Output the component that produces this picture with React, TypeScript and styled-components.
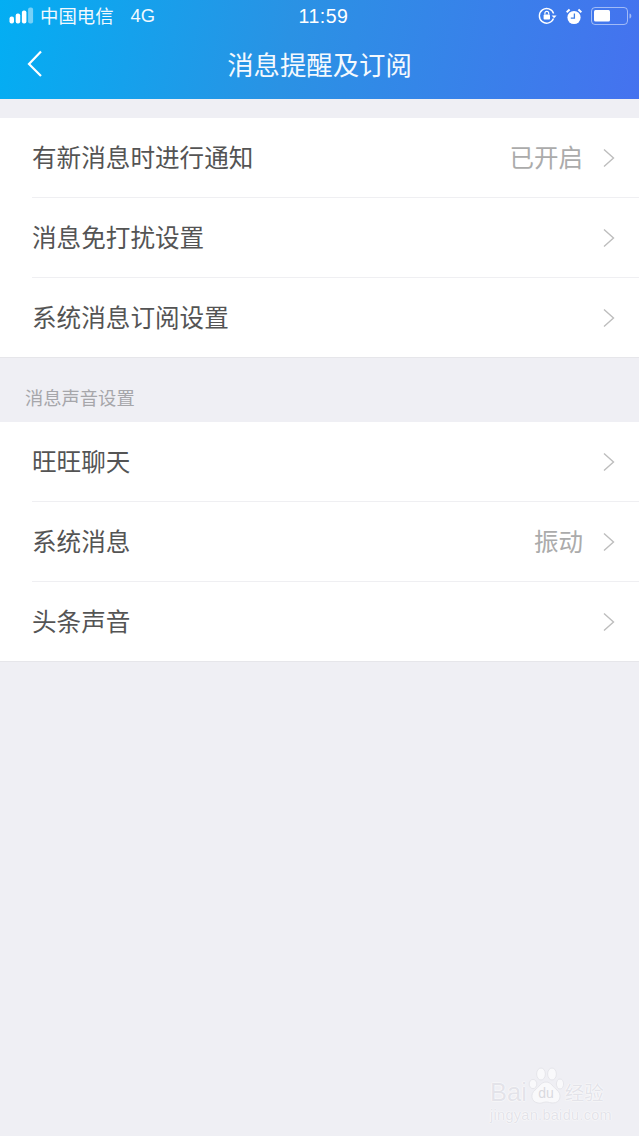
import React from 'react'
import styled, { createGlobalStyle } from 'styled-components'

const FONT = `"Noto Sans CJK SC", "Liberation Sans", sans-serif`

const GlobalStyle = createGlobalStyle`
    html, body {
        margin: 0;
        padding: 0;
        background: #efeff4;
    }
    #root {
        height: 1136px;
    }
`

const Page = styled.div`
    width: 639px;
    height: 1136px;
    background: #efeff4;
    font-family: ${FONT};
    overflow: hidden;
    position: relative;
`

const Header = styled.header`
    height: 99px;
    background: linear-gradient(100deg, #03aef3 0%, #2a92e4 45%, #4572ef 100%);
    color: #fff;
    display: flex;
    flex-direction: column;
`

const StatusBar = styled.div`
    height: 32px;
    padding: 0 6px 0 9px;
    display: grid;
    grid-template-columns: 1fr auto 1fr;
    align-items: center;
`

const StatusLeft = styled.div`
    display: flex;
    align-items: center;
    gap: 5px;
    font-size: 18.4px;
    line-height: 32px;
    color: #f2f9fe;
`

const Carrier = styled.span`
    position: relative;
    top: -1px;
`

const Network = styled.span`
    margin-left: 12px;
    font-family: "Liberation Sans", sans-serif;
`

const Clock = styled.div`
    font-family: "Liberation Sans", sans-serif;
    font-size: 19.5px;
    letter-spacing: 0.5px;
    line-height: 32px;
    margin-left: 5px;
`

const StatusRight = styled.div`
    display: flex;
    align-items: center;
    justify-content: flex-end;
    gap: 9px;
`

const NavBar = styled.div`
    height: 67px;
    display: flex;
    align-items: center;
    justify-content: center;
    position: relative;
`

const BackIcon = styled.svg`
    position: absolute;
    left: 26px;
    top: 18px;
`

const Title = styled.h1`
    margin: 0 0 4px;
    font-size: 26.4px;
    font-weight: 400;
    line-height: 63px;
    color: #f4f9fe;
`

const Section = styled.section<{ $top?: number }>`
    margin-top: ${p => p.$top ?? 0}px;
    background: #fff;
    padding-left: 32px;
    border-bottom: 1px solid #e6e6ea;
`

const Row = styled.div`
    height: 80px;
    box-sizing: border-box;
    display: flex;
    align-items: center;
    padding-right: 23px;
    border-bottom: 1px solid #efeff2;

    &:last-child {
        border-bottom: 0;
        height: 79px;
    }
`

const RowLabel = styled.span`
    flex: 1;
    font-size: 24.6px;
    color: #545454;
    line-height: 1;
    padding-bottom: 2px;
`

const RowValue = styled.span`
    font-size: 24.5px;
    color: #ababab;
    margin-right: 19px;
    line-height: 1;
`

const SectionCaption = styled.div`
    height: 64px;
    box-sizing: border-box;
    padding: 27px 0 0 25px;
    font-size: 18.3px;
    line-height: 24px;
    color: #a6a6aa;
`

const Watermark = styled.div`
    position: absolute;
    left: 490px;
    top: 1066px;
    width: 125px;
    color: #e3e3e9;
    text-shadow: 0 0 1px #fff, 0 0 1px #fff, 0 0 2px #fff;
`

const WatermarkTop = styled.div`
    display: flex;
    align-items: flex-end;
    font-family: "Liberation Sans", sans-serif;
    font-size: 25.5px;
    line-height: 24px;
    height: 38px;
    white-space: nowrap;
`

const WatermarkCn = styled.span`
    font-family: ${FONT};
    font-size: 19.5px;
    line-height: 24px;
    flex-shrink: 0;
`

const WatermarkUrl = styled.div`
    font-family: "Liberation Sans", sans-serif;
    font-size: 14.5px;
    line-height: 16px;
    letter-spacing: 0.3px;
    white-space: nowrap;
    margin-top: 3px;
`

const SignalIcon = () => (
    <svg width="26" height="18" viewBox="0 0 26 18">
        <rect x="0.5" y="9.5" width="4.5" height="7" rx="2" fill="#fff" />
        <rect x="6.7" y="6.5" width="4.5" height="10" rx="2" fill="#fff" />
        <rect x="12.9" y="3.5" width="4.5" height="13" rx="2" fill="#fff" />
        <rect x="19.1" y="0.5" width="5" height="16" rx="2" fill="#fff" opacity="0.45" />
    </svg>
)

const RotationIcon = () => (
    <svg width="19" height="18" viewBox="0 0 19 18" fill="none">
        <path d="M15.5 11.5A7.3 7.3 0 1 1 15.6 6.5" stroke="#fff" strokeWidth="1.4" />
        <path d="M13.6 8.4h5l-2.5 2.8z" fill="#fff" />
        <rect x="5.6" y="7.6" width="6.4" height="5" rx="0.8" fill="#fff" />
        <path d="M6.9 7.6V6.2a1.9 1.9 0 0 1 3.8 0v1.4" stroke="#fff" strokeWidth="1.2" />
    </svg>
)

const AlarmIcon = () => (
    <svg width="16" height="17" viewBox="0 0 16 17" fill="none">
        <circle cx="8" cy="9.5" r="6.6" fill="#fff" />
        <path d="M8.4 5.5v4.6H4.8" stroke="#3f7fe8" strokeWidth="1.3" />
        <path d="M0.6 4.2 3.6 1.4M15.4 4.2 12.4 1.4" stroke="#fff" strokeWidth="2" />
    </svg>
)

const BatteryIcon = () => (
    <svg width="42" height="18" viewBox="0 0 42 18" fill="none">
        <rect x="0.5" y="0.5" width="36" height="17" rx="3.5" stroke="#fff" strokeOpacity="0.5" />
        <rect x="3" y="3" width="16" height="11.5" rx="1.5" fill="#fff" />
        <path d="M38.5 6.5c1.2.3 1.8 1.2 1.8 2.5s-.6 2.2-1.8 2.5z" fill="#fff" fillOpacity="0.5" />
    </svg>
)

const ChevronIcon = () => (
    <svg width="14" height="20" viewBox="0 0 14 20" fill="none">
        <path d="M2 1.5 11.5 10 2 18.5" stroke="#bdbdbd" strokeWidth="1.4" />
    </svg>
)

const PawIcon = () => (
    <svg width="36" height="38" viewBox="0 0 36 38" style={{ margin: '0 1px -1px 1px', flexShrink: 0 }}>
        <g fill="#f9f9fb" stroke="#e6e6eb" strokeWidth="1">
            <ellipse cx="5" cy="17" rx="3.8" ry="4.6" />
            <ellipse cx="13" cy="7" rx="4.4" ry="6" />
            <ellipse cx="24" cy="7" rx="4.4" ry="6" />
            <ellipse cx="32" cy="17" rx="3.6" ry="5" />
            <path d="M18 15c5 0 7 5 11 8 5 4 4 13-4 13-3 0-4-1-7-1s-5 2-8 1c-7-1-8-9-3-13 4-3 6-8 11-8z" />
        </g>
        <text x="18" y="31" textAnchor="middle" fontFamily="Liberation Sans, sans-serif" fontSize="14" fill="#d9d9df" style={{ textShadow: 'none' }}>du</text>
    </svg>
)

type RowItem = { label: string; value?: string }

const NOTIFY_ROWS: RowItem[] = [
    { label: '有新消息时进行通知', value: '已开启' },
    { label: '消息免打扰设置' },
    { label: '系统消息订阅设置' },
]

const SOUND_ROWS: RowItem[] = [
    { label: '旺旺聊天' },
    { label: '系统消息', value: '振动' },
    { label: '头条声音' },
]

const SettingRows = ({ rows }: { rows: RowItem[] }) => (
    <>
        {rows.map(row => (
            <Row key={row.label}>
                <RowLabel>{row.label}</RowLabel>
                {row.value ? <RowValue>{row.value}</RowValue> : null}
                <ChevronIcon />
            </Row>
        ))}
    </>
)

const App = () => (
    <Page>
        <GlobalStyle />
        <Header>
            <StatusBar>
                <StatusLeft>
                    <SignalIcon />
                    <Carrier>中国电信</Carrier>
                    <Network>4G</Network>
                </StatusLeft>
                <Clock>11:59</Clock>
                <StatusRight>
                    <RotationIcon />
                    <AlarmIcon />
                    <BatteryIcon />
                </StatusRight>
            </StatusBar>
            <NavBar>
                <BackIcon width="18" height="28" viewBox="0 0 18 28" fill="none">
                    <path d="M15 1.5 3 14 15 26" stroke="#fff" strokeWidth="2.2" />
                </BackIcon>
                <Title>消息提醒及订阅</Title>
            </NavBar>
        </Header>
        <Section $top={19}>
            <SettingRows rows={NOTIFY_ROWS} />
        </Section>
        <SectionCaption>消息声音设置</SectionCaption>
        <Section>
            <SettingRows rows={SOUND_ROWS} />
        </Section>
        <Watermark>
            <WatermarkTop>
                Bai
                <PawIcon />
                <WatermarkCn>经验</WatermarkCn>
            </WatermarkTop>
            <WatermarkUrl>jingyan.baidu.com</WatermarkUrl>
        </Watermark>
    </Page>
)

export default App
